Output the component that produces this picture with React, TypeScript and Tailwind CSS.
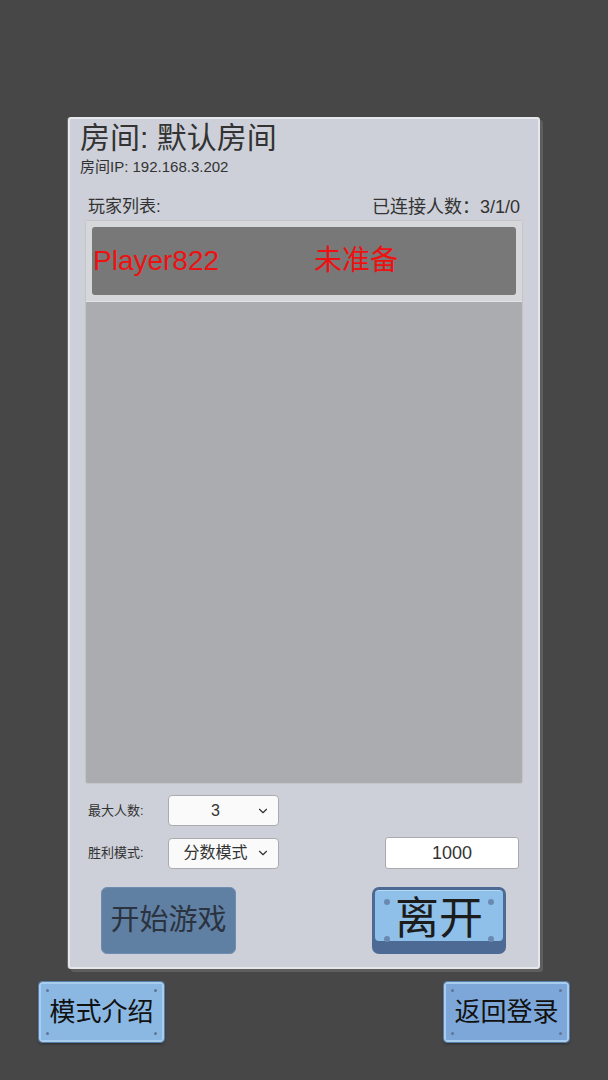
import { ChevronDown } from "lucide-react";

const font = "font-['Liberation_Sans','Noto_Sans_CJK_SC',sans-serif]";

// little screw heads in the corners of the skin buttons
function Dots({ size, color }: { size: string; color: string }) {
  const dot = `absolute rounded-full ${size} ${color}`;
  return (
    <>
      <span className={`${dot} top-[var(--d)] left-[var(--d)]`} />
      <span className={`${dot} top-[var(--d)] right-[var(--d)]`} />
      <span className={`${dot} bottom-[var(--d)] left-[var(--d)]`} />
      <span className={`${dot} bottom-[var(--d)] right-[var(--d)]`} />
    </>
  );
}

function Select({ value }: { value: string }) {
  return (
    <div className="w-[111px] h-[31px] bg-[#fafafa] border border-[#a9abb0] rounded-[4px] flex items-center pl-[6px] pr-[8px]">
      <span className="flex-1 text-center text-[16px] text-[#333]">{value}</span>
      <ChevronDown size={14} strokeWidth={2} color="#333" />
    </div>
  );
}

function FooterButton({ label, tone }: { label: string; tone: string }) {
  return (
    <button
      className={`relative w-[125px] h-[60px] rounded-[3px] border-2 border-[#a9cdef] outline outline-1 outline-[#5a7ea8] shadow-[0_2px_3px_rgba(0,0,0,0.4)] text-[26px] text-[#111] ${tone} [--d:5px]`}
    >
      <Dots size="w-[3px] h-[3px]" color="bg-[#5f7696]" />
      {label}
    </button>
  );
}

export default function App() {
  return (
    <div className={`w-[608px] h-[1080px] bg-[#474747] pt-[117px] ${font}`}>
      <div className="ml-[68px] w-[472px] h-[852px] bg-[#cdd0d8] border-2 border-[#e6e7eb] rounded-[3px] shadow-[3px_3px_0_#5e5e5e,-1px_0_0_#6b6b6b] flex flex-col">
        <h1 className="ml-[10px] mt-[2px] text-[30px] leading-[34px] text-[#333]">房间: 默认房间</h1>
        <p className="ml-[10px] mt-[3px] text-[15px] leading-[18px] text-[#333]">房间IP: 192.168.3.202</p>

        <div className="mt-[21px] pl-[18px] pr-[18px] flex justify-between items-center leading-[20px] text-[#333]">
          <span className="text-[17px]">玩家列表:</span>
          <span className="text-[18px]">已连接人数：3/1/0</span>
        </div>

        {/* player list */}
        <div className="mt-[3px] mx-[15px] h-[564px] bg-[#abacb0] border border-[#c4c5c9] rounded-[3px] flex flex-col">
          <div className="h-[81px] bg-[#d6d7db] border-b border-[#e2e3e6] p-[6px]">
            <div className="h-full bg-[#787878] rounded-[3px] flex items-center text-[28px] text-[#ee1111] pl-[1px]">
              <span className="w-[221px]">Player822</span>
              <span>未准备</span>
            </div>
          </div>
        </div>

        {/* room settings */}
        <div className="mt-[11px] pl-[18px] pr-[19px] flex flex-col gap-[11px]">
          <div className="flex items-center">
            <span className="w-[80px] text-[13px] text-[#333]">最大人数:</span>
            <Select value="3" />
          </div>
          <div className="flex items-center">
            <span className="w-[80px] text-[13px] text-[#333]">胜利模式:</span>
            <Select value="分数模式" />
            <div className="ml-auto w-[134px] h-[32px] bg-white border border-[#a9abb0] rounded-[3px] flex items-center justify-center text-[18px] text-[#333]">
              1000
            </div>
          </div>
        </div>

        <div className="mt-[18px] pl-[31px] pr-[32px] flex justify-between">
          <button className="w-[135px] h-[67px] bg-[#5f7fa3] border border-[#6f8db0] rounded-[6px] text-[29px] text-[#2b3340]">
            开始游戏
          </button>
          <button className="relative w-[134px] h-[67px] bg-[#4c6a93] rounded-[7px] p-[3px] pb-[13px] [--d:12px]">
            <div className="w-full h-full bg-[#8ec0ea] border-t border-[#b4d8f5] rounded-[4px] flex items-center justify-center pt-[6px] text-[44px] leading-none text-[#1c1c1c]">
              离开
            </div>
            <Dots size="w-[6px] h-[6px]" color="bg-[#6a88b0]" />
          </button>
        </div>
      </div>

      <div className="mt-[13px] px-[39px] flex justify-between">
        <FooterButton label="模式介绍" tone="bg-[#8ab8e2]" />
        <FooterButton label="返回登录" tone="bg-[#7ca7d8]" />
      </div>
    </div>
  );
}
